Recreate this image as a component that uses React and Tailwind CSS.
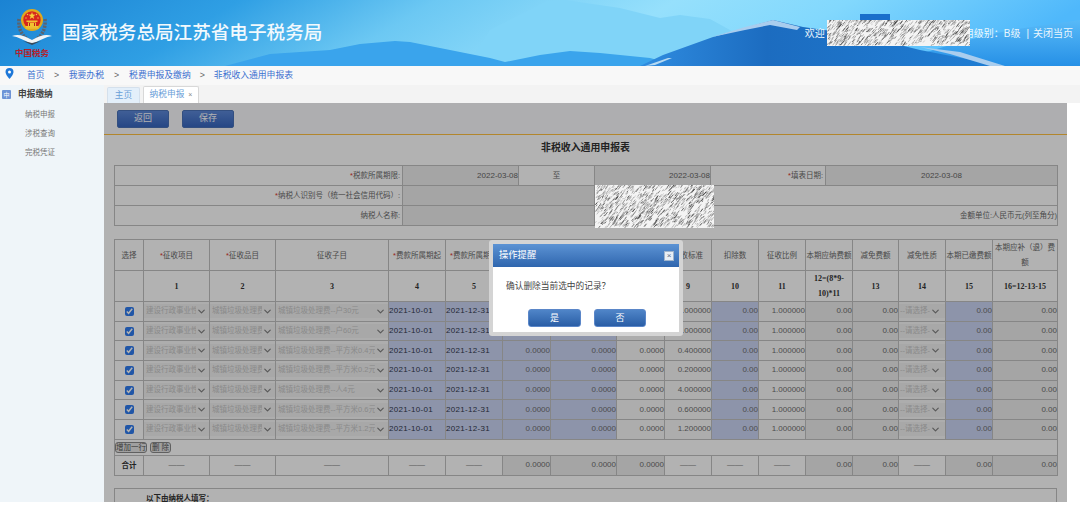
import React from "react";
import { ChevronDown } from "lucide-react";

const fontStack = "font-['Liberation_Sans','Noto_Sans_CJK_SC',sans-serif]";

const colWidths = [29, 66, 66, 113, 57, 57, 48, 66, 48, 47, 47, 47, 47, 46, 47, 47, 65];

const rows = [
  { sub: "城镇垃圾处理费--户30元", rate: "30.000000" },
  { sub: "城镇垃圾处理费--户60元", rate: "60.000000" },
  { sub: "城镇垃圾处理费--平方米0.4元", rate: "0.400000" },
  { sub: "城镇垃圾处理费--平方米0.2元", rate: "0.200000" },
  { sub: "城镇垃圾处理费--人4元", rate: "4.000000" },
  { sub: "城镇垃圾处理费--平方米0.6元", rate: "0.600000" },
  { sub: "城镇垃圾处理费--平方米1.2元", rate: "1.200000" },
];

const headers = [
  ["选择"],
  ["征收项目", true],
  ["征收品目", true],
  ["征收子目"],
  ["费款所属期起", true],
  ["费款所属期止", true],
  ["计费数量"],
  ["计费金额"],
  ["计征基数"],
  ["征收标准"],
  ["扣除数"],
  ["征收比例"],
  ["本期应纳费额"],
  ["减免费额"],
  ["减免性质"],
  ["本期已缴费额"],
  ["本期应补（退）费额"],
];

const numbers = ["", "1", "2", "3", "4", "5", "6", "7", "8", "9", "10", "11", "12=(8*9-10)*11", "13", "14", "15", "16=12-13-15"];

// fake mosaic used for the blanked out parts of the screenshot
function Noise({ width, height, seed }) {
  let s = seed;
  const rand = () => {
    s = (s * 9301 + 49297) % 233280;
    return s / 233280;
  };
  const strokes = [];
  const count = Math.round((width * height) / 5);
  for (let i = 0; i < count; i++) {
    const x = rand() * width;
    const y = rand() * height;
    const len = 0.8 + rand() * 2.4;
    const shade = rand() > 0.6 ? "#1c1c1c" : "#8a8a8a";
    strokes.push(<path key={i} d={`M${x} ${y}l${len} ${-len * 1.3}`} stroke={shade} strokeWidth="0.7" opacity={0.45 + rand() * 0.5} />);
  }
  return (
    <svg width={width} height={height} className="block bg-[#f4f4f4]">
      {strokes}
    </svg>
  );
}

function HeaderBg() {
  return (
    <svg className="absolute inset-0" width="1080" height="66" viewBox="0 0 1080 66" preserveAspectRatio="none">
      <defs>
        <linearGradient id="sky" x1="0" y1="0" x2="1" y2="0.1">
          <stop offset="0" stopColor="#1b83d3" />
          <stop offset="0.22" stopColor="#2f9fe4" />
          <stop offset="0.4" stopColor="#6cc8f3" />
          <stop offset="0.62" stopColor="#96e0fc" />
          <stop offset="0.78" stopColor="#82d8fd" />
          <stop offset="1" stopColor="#4fb8fb" />
        </linearGradient>
        <linearGradient id="backhill" x1="0" y1="0" x2="0" y2="1">
          <stop offset="0" stopColor="#58baf8" />
          <stop offset="1" stopColor="#2690e6" />
        </linearGradient>
        <linearGradient id="bigmountain" x1="0" y1="0" x2="1" y2="0">
          <stop offset="0" stopColor="#2f8ce0" />
          <stop offset="0.35" stopColor="#1c6cc0" />
          <stop offset="1" stopColor="#1f7ed4" />
        </linearGradient>
      </defs>
      <rect width="1080" height="66" fill="url(#sky)" />
      <path d="M470 60L490 30 547 1 565 0 620 8 660 18 680 15 710 19 730 30 770 66H470Z" fill="#80d4f8" />
      <path d="M880 66L960 42 1010 30 1080 20V66Z" fill="url(#backhill)" />
      <path d="M225 66L270 54 330 50 360 44 395 41 410 42 445 49 490 58 505 62 540 55 570 51 600 53 650 58 680 66Z" fill="#3aa4ec" />
      <path d="M640 66L663 55 713 37 745 28 773 20 803 27 860 35 920 50 1003 66Z" fill="url(#bigmountain)" />
      <path d="M712 37L745 27 773 20 800 27 797 30 770 25 745 30Z" fill="#a9cdee" />
      <path d="M645 66L668 58 672 58 655 65Z" fill="#b5d9f2" />
      <path d="M920 47L960 52 1005 66H990L950 54Z" fill="#a9cdee" />
      <rect x="860" y="14" width="30" height="6" fill="#1a6fcb" />
    </svg>
  );
}

function Emblem() {
  return (
    <svg width="46" height="42" viewBox="0 0 46 42" className="block">
      {/* wreath */}
      <path d="M10 14C9 24 13 31 20 35M36 14C37 24 33 31 26 35" fill="none" stroke="#5b6470" strokeWidth="3.5" strokeDasharray="2.2 1.1" />
      {/* wings */}
      <path d="M3 31C9 32 15 35 23 39 31 35 37 32 43 31 37 29 32 30 23 35 14 30 9 29 3 31Z" fill="#f2f4f6" />
      <path d="M14 36L23 40 32 36 23 38Z" fill="#39495a" />
      {/* national emblem */}
      <circle cx="23" cy="15" r="11" fill="#e0a91d" />
      <circle cx="23" cy="15" r="8.700" fill="#d7261e" />
      <path d="M16 24H30L28 21H18Z" fill="#e8b92c" />
      <path d="M17.500 15.500H28.500V17H17.500ZM19 17.500H27V21H19ZM16.500 21H29.500V22.500H16.500Z" fill="#f1c232" />
      <path d="M20 18h1V21h-1ZM25 18h1V21h-1Z" fill="#b8241c" />
      <path d="M23 7l.9 2.600 2.700.1-2.200 1.600.8 2.600-2.200-1.500-2.200 1.500.8-2.600-2.200-1.600 2.700-.1Z" fill="#f6cf3b" />
      <circle cx="18.500" cy="9.500" r="0.700" fill="#f6cf3b" />
      <circle cx="17" cy="13" r="0.700" fill="#f6cf3b" />
      <circle cx="27.500" cy="9.500" r="0.700" fill="#f6cf3b" />
      <circle cx="29" cy="13" r="0.700" fill="#f6cf3b" />
    </svg>
  );
}

function FakeSelect({ text, tiny }) {
  return (
    <div className={`flex h-[14px] items-center bg-[#f1f1f1] text-left text-[#c6c6c6] ${tiny ? "pr-1 pl-px" : "px-[2px]"}`}>
      <span className="min-w-0 flex-1 overflow-hidden text-[7.5px] leading-[14px] whitespace-nowrap">{text}</span>
      <ChevronDown className="shrink-0 text-[#808080]" size={11} strokeWidth={2.6} />
    </div>
  );
}

function Cell({ children, blue, dark, align = "right" }) {
  const bg = blue ? "bg-[#cad4f4]" : dark ? "bg-[#ececec]" : "bg-[#f8f8f8]";
  const alignClass = align === "left" ? "text-left" : "text-right";
  return <td className={`overflow-hidden border border-[#c0c0c0] p-0 text-[8px] leading-none whitespace-nowrap text-[#6f6f6f] ${bg} ${alignClass}`}>{children}</td>;
}

function Dash({ dark }) {
  return <td className={`border border-[#c0c0c0] p-0 text-center text-[8px] text-[#777777] ${dark ? "bg-[#ececec]" : ""}`}>——</td>;
}

function FormTable() {
  const labelClass = "border border-[#c0c0c0] pr-[2px] text-right text-[7.5px] text-[#6a6a6a]";
  const valueClass = "border border-[#c0c0c0] bg-[#ececec] text-right text-[8px] text-[#666666]";
  return (
    <table className="w-[943px] table-fixed border-collapse">
      <colgroup>
        <col className="w-[288px]" />
        <col className="w-[116px]" />
        <col className="w-[76px]" />
        <col className="w-[116px]" />
        <col className="w-[115px]" />
        <col className="w-[232px]" />
      </colgroup>
      <tbody>
        <tr className="h-[20px]">
          <td className={labelClass}><span className="text-[#d8352a]">*</span>税款所属期限:</td>
          <td className={valueClass}>2022-03-08</td>
          <td className="border border-[#c0c0c0] text-center text-[7.5px] text-[#6a6a6a]">至</td>
          <td className={valueClass}>2022-03-08</td>
          <td className={labelClass}><span className="text-[#d8352a]">*</span>填表日期:</td>
          <td className={`${valueClass} !text-center`}>2022-03-08</td>
        </tr>
        <tr className="h-[20px]">
          <td className={labelClass}><span className="text-[#d8352a]">*</span>纳税人识别号（统一社会信用代码）:</td>
          <td className={valueClass} colSpan={2}></td>
          <td className="border border-[#c0c0c0]" colSpan={3}></td>
        </tr>
        <tr className="h-[20px]">
          <td className={labelClass}>纳税人名称:</td>
          <td className={valueClass} colSpan={2}></td>
          <td className="border border-[#c0c0c0] text-right text-[7.5px] text-[#6a6a6a]" colSpan={3}>金额单位:人民币元(列至角分)</td>
        </tr>
      </tbody>
    </table>
  );
}

function DataTable() {
  return (
    <table className="w-[943px] table-fixed border-collapse">
      <colgroup>
        {colWidths.map((w, i) => (
          <col key={i} style={{ width: w }} />
        ))}
      </colgroup>
      <thead>
        <tr className="h-[31px]">
          {headers.map(([label, req], i) => (
            <th key={i} className="border border-[#c0c0c0] p-0 text-center text-[7.5px] leading-[15px] font-normal text-[#6a6a6a]">
              {req && <span className="text-[#d8352a]">*</span>}
              {label}
            </th>
          ))}
        </tr>
        <tr className="h-[31px]">
          {numbers.map((n, i) => (
            <th key={i} className="border border-[#c0c0c0] p-0 text-center font-['Liberation_Serif','Noto_Sans_CJK_SC',serif] text-[8px] leading-[15px] font-bold text-[#333333]">
              {n}
            </th>
          ))}
        </tr>
      </thead>
      <tbody>
        {rows.map((row) => (
          <tr key={row.sub} className="h-[19.7px]">
            <td className="border border-[#c0c0c0] p-0 text-center">
              <input type="checkbox" defaultChecked className="mx-auto block h-[9px] w-[9px] accent-[#2f7bf0]" />
            </td>
            <Cell><FakeSelect text="建设行政事业性收费" /></Cell>
            <Cell><FakeSelect text="城镇垃圾处理费收费" /></Cell>
            <Cell><FakeSelect text={row.sub} /></Cell>
            <Cell blue align="left"><span className="tracking-[0.3px] text-[#333a4d]">2021-10-01</span></Cell>
            <Cell blue align="left"><span className="tracking-[0.3px] text-[#333a4d]">2021-12-31</span></Cell>
            <Cell blue>0.0000</Cell>
            <Cell blue>0.0000</Cell>
            <Cell>0.0000</Cell>
            <Cell>{row.rate}</Cell>
            <Cell blue>0.00</Cell>
            <Cell>1.000000</Cell>
            <Cell dark>0.00</Cell>
            <Cell dark>0.00</Cell>
            <Cell><FakeSelect text="--请选择--" tiny /></Cell>
            <Cell blue>0.00</Cell>
            <Cell dark>0.00</Cell>
          </tr>
        ))}
        <tr className="h-[16px]">
          <td colSpan={17} className="border border-[#c0c0c0] p-0">
            <div className="flex items-center gap-[3px]">
              <button className="h-[11px] w-[32px] rounded-[3px] border border-[#8a8a8a] bg-[#e6e6e6] text-[7.5px] leading-none text-[#555555]">增加一行</button>
              <button className="h-[11px] w-[21px] rounded-[3px] border border-[#8a8a8a] bg-[#e6e6e6] text-[7.5px] leading-none text-[#555555]">删 除</button>
            </div>
          </td>
        </tr>
        <tr className="h-[20px]">
          <td className="border border-[#c0c0c0] p-0 text-center text-[7.5px] font-bold text-[#333333]">合计</td>
          <Dash />
          <Dash />
          <Dash />
          <Dash />
          <Dash />
          <Cell dark>0.0000</Cell>
          <Cell dark>0.0000</Cell>
          <Cell dark>0.0000</Cell>
          <Dash />
          <Dash />
          <Dash />
          <Cell dark>0.00</Cell>
          <Cell dark>0.00</Cell>
          <Dash />
          <Cell dark>0.00</Cell>
          <Cell dark>0.00</Cell>
        </tr>
      </tbody>
    </table>
  );
}

function ConfirmDialog() {
  const btn = "h-[18px] rounded-[3px] border border-[#5a86c8] bg-gradient-to-b from-[#4f85c8] to-[#2a5ea6] text-[9px] leading-none text-white";
  return (
    <div className="absolute top-[137px] left-[385px] w-[194px] rounded-[3px] bg-[#d4d4d4] p-[4px]">
      <div className="bg-white">
        <div className="flex h-[23px] items-center justify-between bg-gradient-to-b from-[#5c93d4] to-[#2f66ae] pr-[5px] pl-[6px]">
          <span className="text-[9.3px] text-white">操作提醒</span>
          <span className="flex h-[10px] w-[10px] items-center justify-center border border-[#9fb4cc] bg-[#e8eef5] text-[8px] leading-none text-[#5b6b80]">×</span>
        </div>
        <div className="pt-[13px] pl-[13px] text-[8.7px] leading-[12px] text-[#444444]">确认删除当前选中的记录？</div>
        <div className="flex gap-[13px] pt-[17px] pb-[5px] pl-[35px]">
          <button className={`${btn} w-[53px]`}>是</button>
          <button className={`${btn} w-[52px]`}>否</button>
        </div>
      </div>
    </div>
  );
}

export default function App() {
  return (
    <div className={`relative h-[507px] w-[1080px] overflow-hidden bg-white ${fontStack}`}>
      <header className="relative flex h-[66px] items-center">
        <HeaderBg />
        <div className="relative ml-[9px] flex h-[66px] w-[46px] flex-col items-center pt-[5px]">
          <Emblem />
          <span className="mt-[1px] font-['Liberation_Serif','Noto_Sans_CJK_SC',serif] text-[8.5px] leading-[10px] font-bold whitespace-nowrap text-[#b4202a]">中国税务</span>
        </div>
        <h1 className="relative ml-[7px] text-[18.6px] leading-none font-medium text-[#f2f9fd]">国家税务总局江苏省电子税务局</h1>
        <div className="relative ml-auto flex items-center pr-[7px] text-[10px] text-[#eaf6fd]">
          <span className="mr-[2px]">欢迎</span>
          <div className="relative z-10 mt-[-1px]">
            <Noise width={143} height={26} seed={17} />
          </div>
          <span className="-ml-[16px]">信用级别：B级</span>
          <span className="mr-[4px] ml-[6px]">|</span>
          <span>关闭当页</span>
        </div>
      </header>

      <nav className="flex h-[19px] items-center bg-[#f8f8f8] text-[8.8px] text-[#3e72d0]">
        <svg width="9" height="11" viewBox="0 0 9 11" className="mb-[5px] ml-[5px]">
          <path d="M4.5 0A4 4 0 0 0 .5 4c0 2.8 4 7 4 7s4-4.200 4-7a4 4 0 0 0-4-4Z" fill="#1f78d8" />
          <circle cx="4.500" cy="4" r="1.500" fill="#ffffff" />
        </svg>
        <span className="ml-[13px]">首页</span>
        <span className="mx-[9.5px] text-[#666666]">&gt;</span>
        <span>我要办税</span>
        <span className="mx-[10px] text-[#666666]">&gt;</span>
        <span>税费申报及缴纳</span>
        <span className="mx-[9px] text-[#666666]">&gt;</span>
        <span>非税收入通用申报表</span>
      </nav>

      <div className="flex h-[417px]">
        <aside className="h-full w-[104px] shrink-0 bg-[#eff5f9]">
          <div className="flex h-[19px] items-center gap-[7px] pl-[2px]">
            <span className="flex h-[9px] w-[9px] items-center justify-center rounded-[1px] bg-[#6d94d6] text-[6px] leading-none text-white">中</span>
            <span className="text-[8.7px] font-bold text-[#444444]">申报缴纳</span>
          </div>
          <ul className="flex flex-col pt-[1px] pl-[25px] text-[7.5px] leading-[19px] text-[#777777]">
            <li>纳税申报</li>
            <li>涉税查询</li>
            <li>完税凭证</li>
          </ul>
        </aside>

        <div className="flex min-w-0 flex-1 flex-col">
          <div className="flex h-[18px] shrink-0 items-end gap-[3px] bg-[#f3f3f3] pl-[3px]">
            <div className="flex h-[16px] w-[33px] items-center justify-center rounded-t-[2px] border border-b-0 border-[#d4e0ec] bg-[#e3effa] text-[8.7px] text-[#6aa0d8]">主页</div>
            <div className="flex h-[17px] w-[56px] items-center justify-center gap-[4px] rounded-t-[2px] border border-b-0 border-[#d8d8d8] bg-white text-[8.7px] text-[#6aa0d8]">
              纳税申报<span className="text-[7px] text-[#888888]">×</span>
            </div>
          </div>

          <main className="relative h-[399px] w-[963px] overflow-hidden bg-white">
            <div className="flex h-[32px] items-center gap-[13px] border-b border-[#ffc040] bg-[#f9fafc] pl-[13px]">
              <button className="h-[18px] w-[52px] rounded-[2px] border border-[#4a72b8] bg-gradient-to-b from-[#5c88d8] to-[#3766bf] text-[9px] leading-none text-white">返回</button>
              <button className="h-[18px] w-[52px] rounded-[2px] border border-[#4a72b8] bg-gradient-to-b from-[#5c88d8] to-[#3766bf] text-[9px] leading-none text-white">保存</button>
            </div>
            <div className="px-[10px]">
              <h2 className="flex h-[30px] items-center justify-center pb-[3px] text-[9.9px] font-bold text-[#333333]">非税收入通用申报表</h2>
              <FormTable />
              <div className="h-[13px]"></div>
              <DataTable />
              <div className="mt-[12px] h-[40px] w-[943px] border border-[#c0c0c0] pt-[4px] pl-[31px] text-[7.5px] font-bold text-[#333333]">以下由纳税人填写：</div>
            </div>
            <div className="absolute inset-0 bg-black/30"></div>
            <ConfirmDialog />
          </main>
        </div>
      </div>

      <div className="absolute top-[185px] left-[595px]">
        <Noise width={119} height={43} seed={71} />
      </div>
    </div>
  );
}
